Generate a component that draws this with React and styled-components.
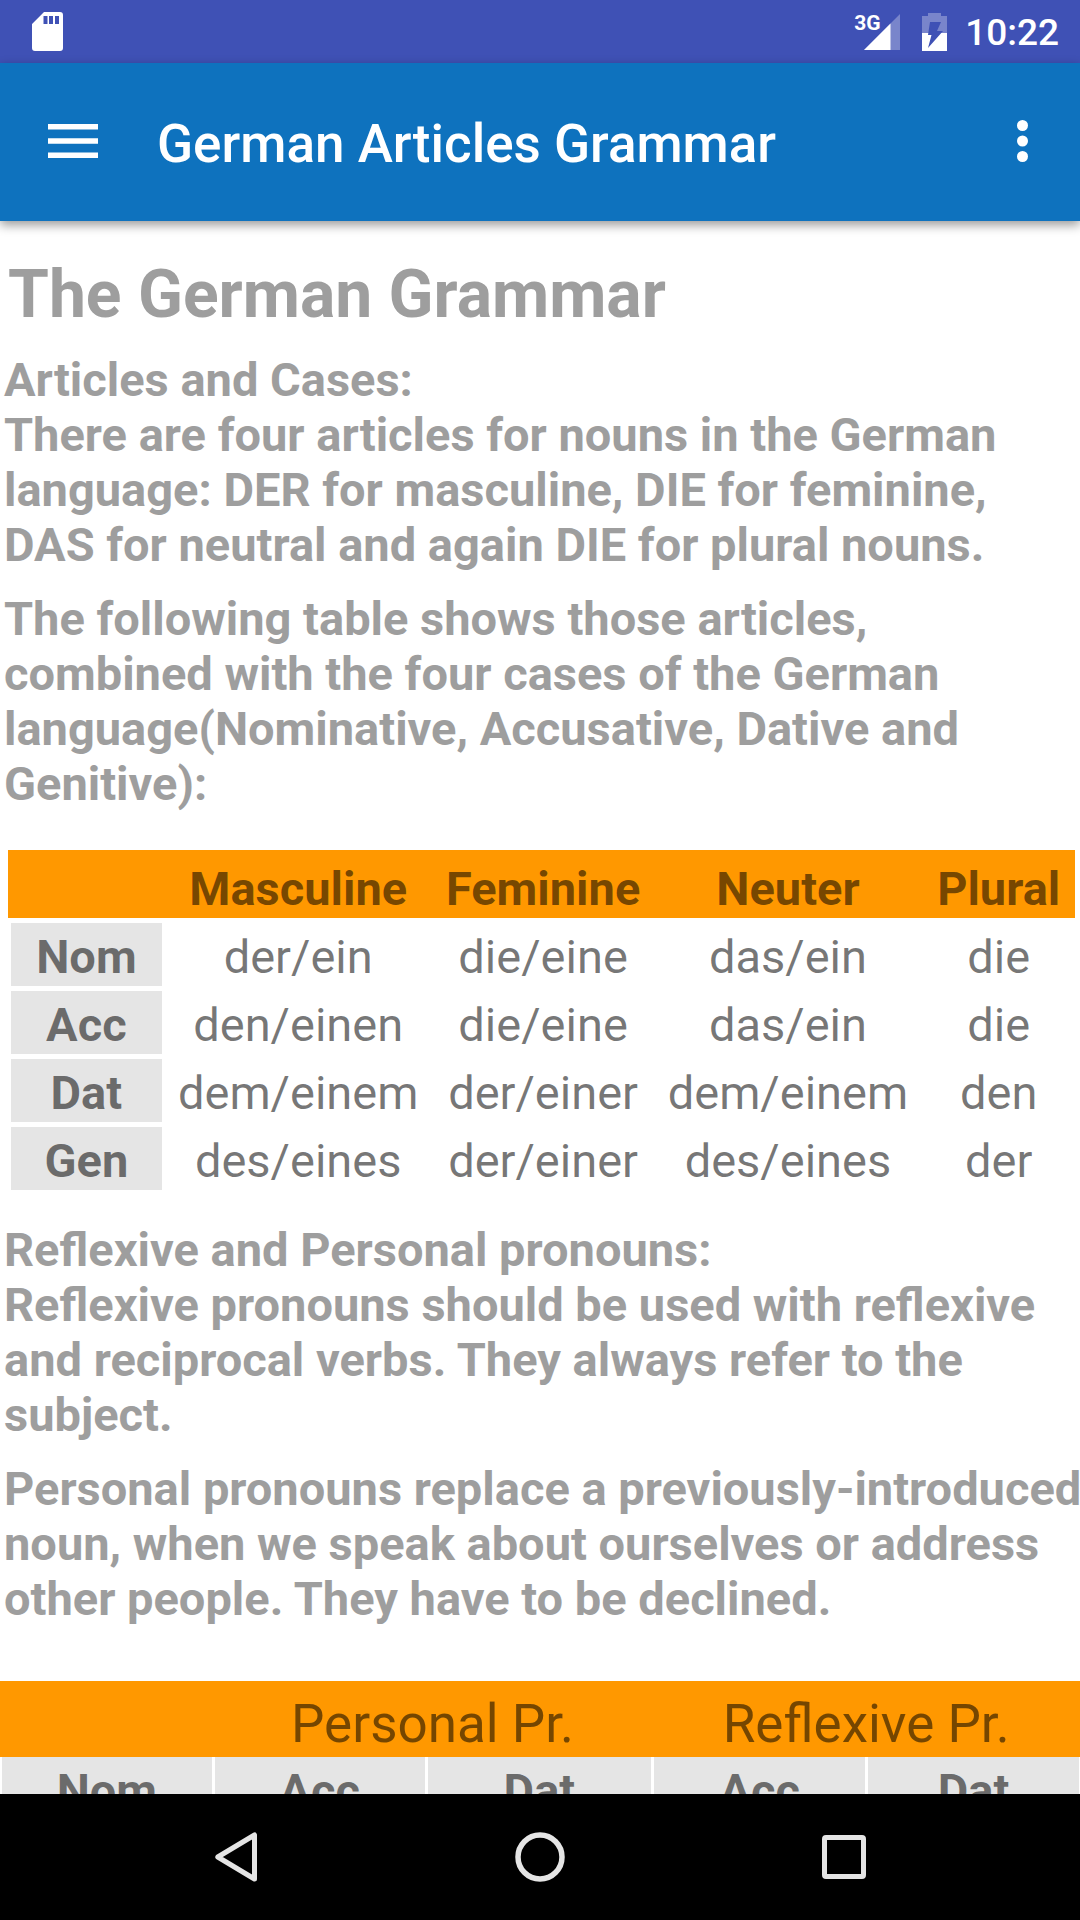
import React from "react";
import styled, { createGlobalStyle } from "styled-components";

const GlobalStyle = createGlobalStyle`
  *, *::before, *::after { box-sizing: border-box; }
  body {
    margin: 0;
    background: #fff;
    font-family: Roboto, "Liberation Sans", sans-serif;
  }
`;

const Screen = styled.div`
  display: flex;
  flex-direction: column;
  height: 100vh;
  overflow: hidden;
  background: #fff;
`;

const StatusBar = styled.header`
  display: flex;
  align-items: center;
  justify-content: space-between;
  flex: none;
  height: 63px;
  padding: 0 21px 0 32px;
  background: #3f51b5;
  color: #fff;
`;

const StatusIcons = styled.div`
  display: flex;
  align-items: center;
`;

const Signal = styled.div`
  position: relative;
  display: flex;
  margin-right: 22px;
`;

const NetworkType = styled.span`
  position: absolute;
  top: -4px;
  left: -10px;
  font-size: 21px;
  line-height: 26px;
  font-weight: 700;
`;

const Clock = styled.time`
  margin-left: 18px;
  padding-top: 2px;
  font-size: 37px;
  line-height: 44px;
  font-weight: 500;
`;

const AppBar = styled.div`
  position: relative;
  display: flex;
  align-items: center;
  flex: none;
  height: 158px;
  padding: 0 42px 2px 38px;
  background: #0e72be;
  color: #fff;
  box-shadow: 0 4px 10px rgba(0, 0, 0, 0.4);
`;

const IconButton = styled.button`
  display: flex;
  padding: 10px;
  border: 0;
  background: none;
  color: inherit;
`;

const AppTitle = styled.h1`
  flex: 1;
  margin: 0;
  padding: 6px 0 0 49px;
  font-size: 53px;
  line-height: 62px;
  font-weight: 500;
`;

const Content = styled.main`
  flex: 1;
  min-height: 0;
  overflow-x: hidden;
  overflow-y: auto;
  scrollbar-width: none;
  padding-top: 35px;
`;

const PageHeading = styled.h2`
  margin: 0 0 19px;
  padding-left: 8px;
  font-size: 66px;
  line-height: 77px;
  font-weight: 700;
  color: #9e9e9e;
`;

const Section = styled.section`
  padding-left: 4px;
  margin-bottom: ${(p) => (p.$spacious ? 55 : 39)}px;
  font-size: 47px;
  line-height: 55px;
  font-weight: 700;
  color: #9e9e9e;
`;

const SectionHeading = styled.h3`
  margin: 0;
  font: inherit;
`;

const Paragraph = styled.p`
  margin: 0 -4px 0 0;

  & + & {
    margin-top: 19px;
  }
`;

const Table = styled.table`
  width: ${(p) => (p.$inset ? "calc(100% - 13px)" : "100%")};
  margin: ${(p) => (p.$inset ? "0 5px 32px 8px" : "0")};
  table-layout: fixed;
  border-spacing: 0;
  font-size: 47px;
  line-height: 55px;
  color: rgba(0, 0, 0, 0.54);
`;

const Column = styled.col`
  width: ${(p) => p.$width}%;
`;

const HeadRow = styled.tr`
  background: #ff9800;
`;

const HeadCell = styled.th`
  padding: ${(p) => (p.$large ? "12px 0 2px" : "11px 0 2px")};
  font-size: ${(p) => (p.$large ? 53 : 47)}px;
  line-height: ${(p) => (p.$large ? 62 : 55)}px;
  font-weight: ${(p) => (p.$large ? 400 : 700)};
  text-align: center;
  white-space: nowrap;
`;

const EmptyHeadCell = styled.td`
  padding: 0;
`;

const LabelCell = styled.th`
  padding: 6px 0 2px;
  border: solid transparent;
  border-width: ${(p) => (p.$flush ? "0 1px 0 2px" : "5px 2px 0 3px")};
  background: #e5e5e5;
  background-clip: padding-box;
  text-align: center;
  font-weight: 700;
`;

const Cell = styled.td`
  padding: 11px 0 2px;
  text-align: center;
  white-space: nowrap;
`;

const NavBar = styled.nav`
  display: flex;
  flex: none;
  height: 126px;
  padding: 0 84px;
  background: #000;
`;

const NavButton = styled.button`
  display: flex;
  flex: 1;
  align-items: center;
  justify-content: center;
  padding: 0;
  border: 0;
  background: none;
  color: #e5e5e5;
`;

const articleRows = [
  ["Nom", "der/ein", "die/eine", "das/ein", "die"],
  ["Acc", "den/einen", "die/eine", "das/ein", "die"],
  ["Dat", "dem/einem", "der/einer", "dem/einem", "den"],
  ["Gen", "des/eines", "der/einer", "des/eines", "der"],
];

const SdCardIcon = () => (
  <svg width="31" height="39" viewBox="0 0 31 39" aria-hidden="true">
    <path
      fill="#fff"
      fillRule="evenodd"
      d="M12 0H28a3 3 0 0 1 3 3V36a3 3 0 0 1-3 3H3a3 3 0 0 1-3-3V12ZM11.500 4V12h4V4ZM17 4V12h4V4ZM23 4V12h4V4Z"
    />
  </svg>
);

const SignalIcon = () => (
  <svg width="36" height="36" viewBox="0 0 36 36" aria-hidden="true">
    <path fill="#fff" fillOpacity="0.3" d="M36 0V36H0Z" />
    <path fill="#fff" d="M26.500 9.500V36H0Z" />
  </svg>
);

const BatteryIcon = () => (
  <svg width="25" height="38" viewBox="0 0 25 38" aria-hidden="true">
    <path fill="#fff" fillOpacity="0.3" d="M6 0H19V3H25V20H0V3H6Z" />
    <path fill="#fff" d="M0 20H25V38H0Z" />
    <path fill="#3f51b5" d="M8 9H19L15 18H21L6 35L9.500 22H6Z" />
  </svg>
);

const MenuIcon = () => (
  <svg width="50" height="34" viewBox="0 0 50 34" aria-hidden="true">
    <path fill="currentColor" d="M0 0H50V5.500H0ZM0 14.300H50V19.800H0ZM0 28.500H50V34H0Z" />
  </svg>
);

const MoreIcon = () => (
  <svg width="11" height="42" viewBox="0 0 11 42" aria-hidden="true">
    <g fill="currentColor">
      <circle cx="5.500" cy="5.500" r="5.500" />
      <circle cx="5.500" cy="21" r="5.500" />
      <circle cx="5.500" cy="36.500" r="5.500" />
    </g>
  </svg>
);

const BackIcon = () => (
  <svg width="42" height="50" viewBox="0 0 42 50" aria-hidden="true">
    <path
      fill="none"
      stroke="currentColor"
      strokeWidth="5"
      strokeLinejoin="round"
      d="M39.500 3V47L2.800 25Z"
    />
  </svg>
);

const HomeIcon = () => (
  <svg width="50" height="50" viewBox="0 0 50 50" aria-hidden="true">
    <circle cx="25" cy="25" r="22" fill="none" stroke="currentColor" strokeWidth="5.500" />
  </svg>
);

const RecentsIcon = () => (
  <svg width="44" height="44" viewBox="0 0 44 44" aria-hidden="true">
    <rect
      x="2.500"
      y="2.500"
      width="39"
      height="39"
      rx="1.500"
      fill="none"
      stroke="currentColor"
      strokeWidth="5"
    />
  </svg>
);

export default function App() {
  return (
    <Screen>
      <GlobalStyle />
      <StatusBar>
        <SdCardIcon />
        <StatusIcons>
          <Signal>
            <SignalIcon />
            <NetworkType>3G</NetworkType>
          </Signal>
          <BatteryIcon />
          <Clock>10:22</Clock>
        </StatusIcons>
      </StatusBar>
      <AppBar>
        <IconButton type="button" aria-label="Open navigation">
          <MenuIcon />
        </IconButton>
        <AppTitle>German Articles Grammar</AppTitle>
        <IconButton type="button" aria-label="More options">
          <MoreIcon />
        </IconButton>
      </AppBar>
      <Content>
        <PageHeading>The German Grammar</PageHeading>
        <Section>
          <SectionHeading>Articles and Cases:</SectionHeading>
          <Paragraph>
            There are four articles for nouns in the German language: DER for
            masculine, DIE for feminine, DAS for neutral and again DIE for
            plural nouns.
          </Paragraph>
          <Paragraph>
            The following table shows those articles, combined with the four
            cases of the German language(Nominative, Accusative, Dative and
            Genitive):
          </Paragraph>
        </Section>
        <Table $inset>
          <colgroup>
            <Column $width={14.6} />
            <Column $width={25.2} />
            <Column $width={20.7} />
            <Column $width={25.2} />
            <Column $width={14.3} />
          </colgroup>
          <thead>
            <HeadRow>
              <EmptyHeadCell />
              {["Masculine", "Feminine", "Neuter", "Plural"].map((name) => (
                <HeadCell key={name} scope="col">
                  {name}
                </HeadCell>
              ))}
            </HeadRow>
          </thead>
          <tbody>
            {articleRows.map(([label, ...forms]) => (
              <tr key={label}>
                <LabelCell scope="row">{label}</LabelCell>
                {forms.map((form, i) => (
                  <Cell key={i}>{form}</Cell>
                ))}
              </tr>
            ))}
          </tbody>
        </Table>
        <Section $spacious>
          <SectionHeading>Reflexive and Personal pronouns:</SectionHeading>
          <Paragraph>
            Reflexive pronouns should be used with reflexive and reciprocal
            verbs. They always refer to the subject.
          </Paragraph>
          <Paragraph>
            Personal pronouns replace a previously-introduced noun, when we
            speak about ourselves or address other people. They have to be
            declined.
          </Paragraph>
        </Section>
        <Table>
          <colgroup>
            <Column $width={19.7} />
            <Column $width={19.7} />
            <Column $width={21} />
            <Column $width={19.8} />
            <Column $width={19.8} />
          </colgroup>
          <thead>
            <HeadRow>
              <EmptyHeadCell />
              <HeadCell $large scope="colgroup" colSpan={2}>
                Personal Pr.
              </HeadCell>
              <HeadCell $large scope="colgroup" colSpan={2}>
                Reflexive Pr.
              </HeadCell>
            </HeadRow>
            <tr>
              {["Nom", "Acc", "Dat", "Acc", "Dat"].map((name, i) => (
                <LabelCell key={i} $flush scope="col">
                  {name}
                </LabelCell>
              ))}
            </tr>
          </thead>
        </Table>
      </Content>
      <NavBar aria-label="System">
        <NavButton type="button" aria-label="Back">
          <BackIcon />
        </NavButton>
        <NavButton type="button" aria-label="Home">
          <HomeIcon />
        </NavButton>
        <NavButton type="button" aria-label="Recent apps">
          <RecentsIcon />
        </NavButton>
      </NavBar>
    </Screen>
  );
}
